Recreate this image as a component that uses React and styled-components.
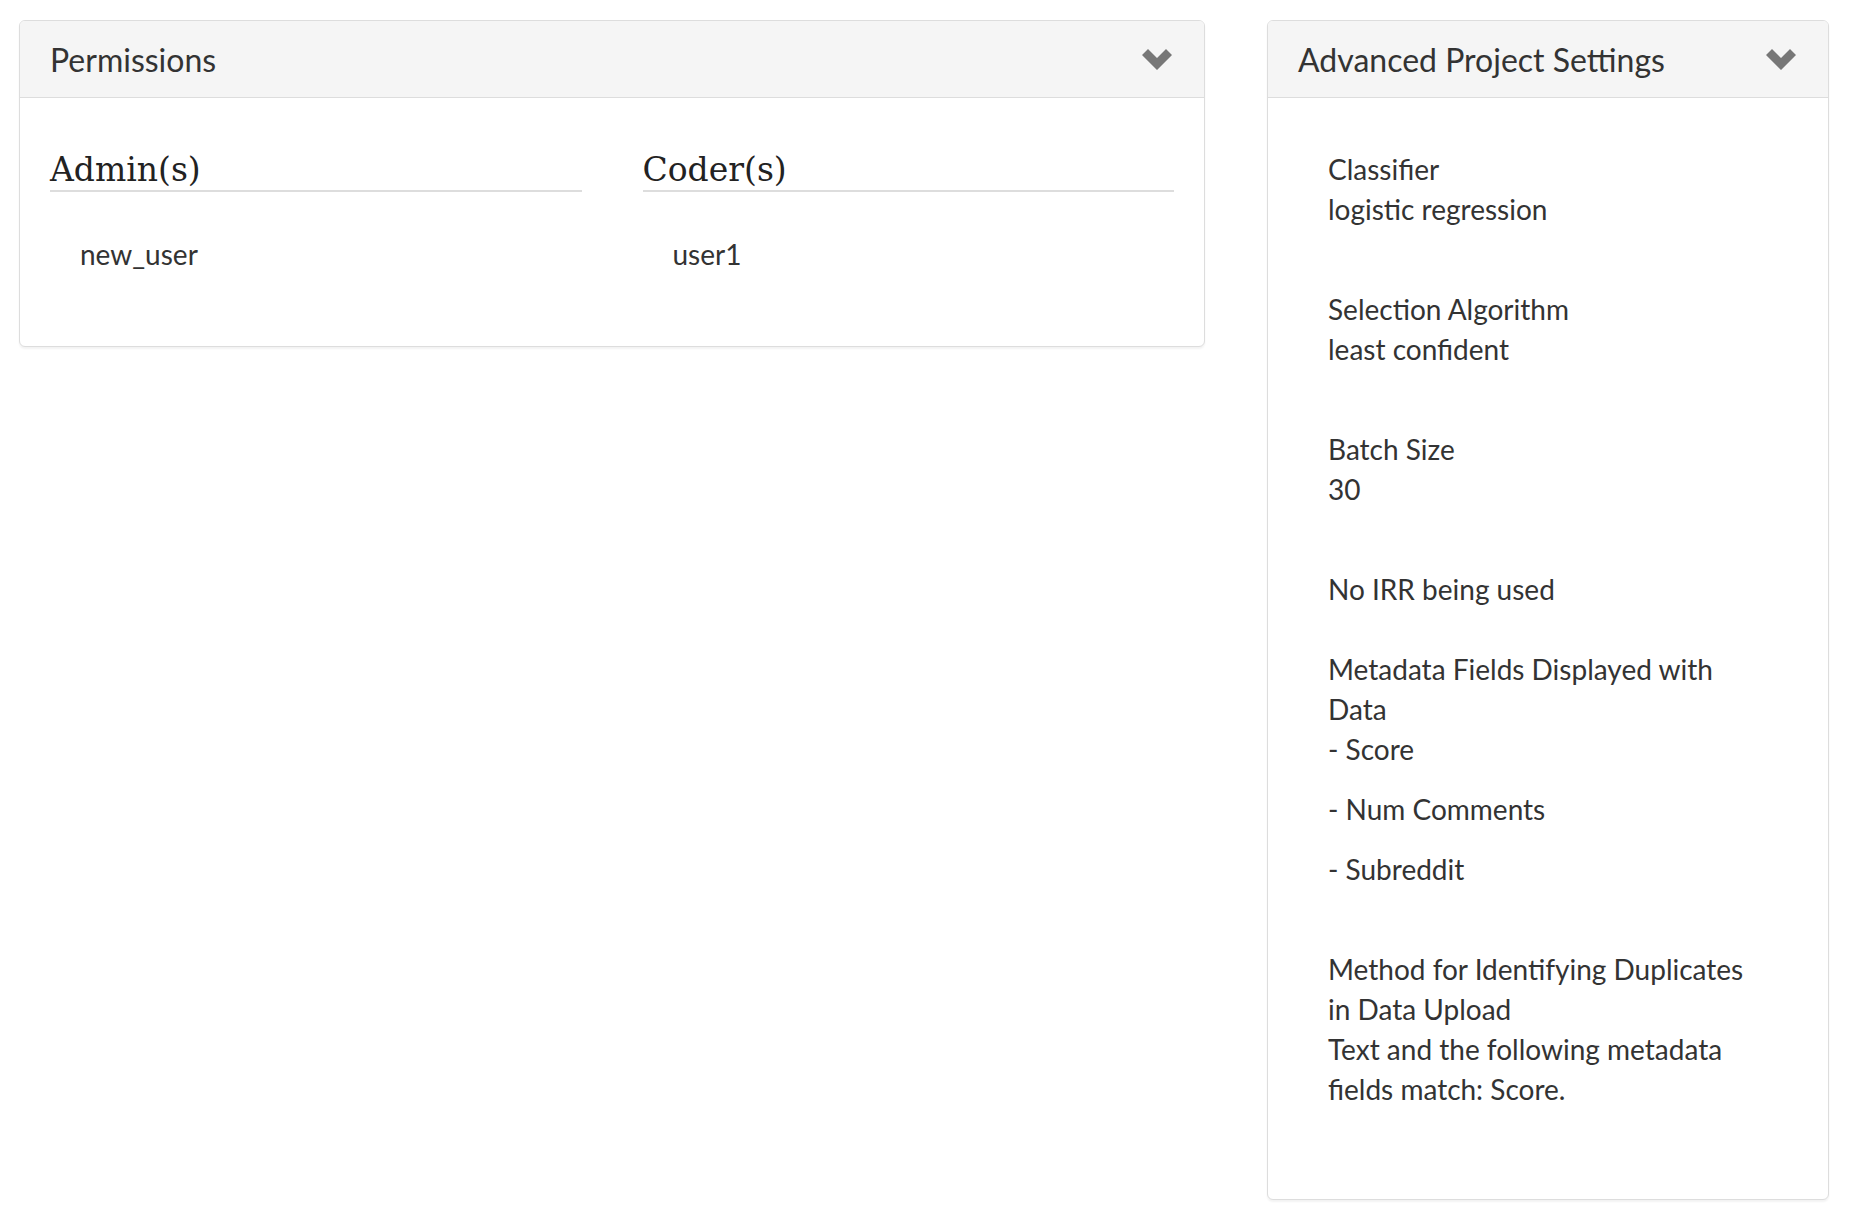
import styled, { createGlobalStyle } from "styled-components";

const GlobalStyle = createGlobalStyle`
  body {
    margin: 0;
    background: #fff;
    font-family: Lato, "Open Sans", sans-serif;
    color: #333;
  }
`;

const Page = styled.div`
  display: grid;
  grid-template-columns: minmax(0, 1186fr) minmax(0, 562fr);
  column-gap: 62px;
  align-items: start;
  padding: 20px 27px 20px 19px;
`;

const Panel = styled.div`
  border: 1px solid #ddd;
  border-radius: 6px;
  background: #fff;
  box-shadow: 0 2px 2px rgba(0, 0, 0, 0.05);
  overflow: hidden;
`;

const PanelHeading = styled.div`
  display: flex;
  align-items: center;
  justify-content: space-between;
  background: #f5f5f5;
  border-bottom: 1px solid #ddd;
  padding: 21px 32px 20px 30px;
`;

const PanelTitle = styled.h3`
  margin: 0;
  font-size: 32px;
  font-weight: 400;
  line-height: 1.1;
  color: #333;
`;

const PanelBody = styled.div`
  padding: ${(p) => p.$padding};
  font-size: 28px;
  line-height: 40px;
`;

const Columns = styled.div`
  display: grid;
  grid-template-columns: 1fr 1fr;
  column-gap: 61px;
`;

const RoleHeading = styled.h3`
  margin: 24px 0 0;
  padding-bottom: 2px;
  border-bottom: 2px solid #ddd;
  font-family: "DejaVu Serif", "Liberation Serif", serif;
  font-size: 33px;
  font-weight: 400;
  line-height: 1.1;
  color: #222;
`;

const UserList = styled.ul`
  list-style: none;
  margin: 42px 0 42px;
  padding-left: 30px;
`;

const Setting = styled.div`
  margin-bottom: ${(p) => p.$gap}px;
`;

const Line = styled.div`
  margin-bottom: ${(p) => p.$gap || 0}px;
`;

const Chevron = () => (
  <svg width="30" height="21" viewBox="0 0 30 21" aria-hidden="true">
    <polygon points="0,6 6,0 15,9 24,0 30,6 15,21" fill="#777" />
  </svg>
);

export default function App() {
  return (
    <>
      <GlobalStyle />
      <Page>
        <Panel>
          <PanelHeading>
            <PanelTitle>Permissions</PanelTitle>
            <Chevron />
          </PanelHeading>
          <PanelBody $padding="30px">
            <Columns>
              <div>
                <RoleHeading>Admin(s)</RoleHeading>
                <UserList>
                  <li>new_user</li>
                </UserList>
              </div>
              <div>
                <RoleHeading>Coder(s)</RoleHeading>
                <UserList>
                  <li>user1</li>
                </UserList>
              </div>
            </Columns>
          </PanelBody>
        </Panel>

        <Panel>
          <PanelHeading>
            <PanelTitle>Advanced Project Settings</PanelTitle>
            <Chevron />
          </PanelHeading>
          <PanelBody $padding="51px 70px 90px 60px">
            <Setting $gap={60}>
              <Line>Classifier</Line>
              <Line>logistic regression</Line>
            </Setting>
            <Setting $gap={60}>
              <Line>Selection Algorithm</Line>
              <Line>least confident</Line>
            </Setting>
            <Setting $gap={60}>
              <Line>Batch Size</Line>
              <Line>30</Line>
            </Setting>
            <Setting $gap={40}>
              <Line>No IRR being used</Line>
            </Setting>
            <Setting $gap={60}>
              <Line>Metadata Fields Displayed with Data</Line>
              <Line $gap={20}>- Score</Line>
              <Line $gap={20}>- Num Comments</Line>
              <Line>- Subreddit</Line>
            </Setting>
            <Setting $gap={0}>
              <Line>Method for Identifying Duplicates in Data Upload</Line>
              <Line>Text and the following metadata fields match: Score.</Line>
            </Setting>
          </PanelBody>
        </Panel>
      </Page>
    </>
  );
}
